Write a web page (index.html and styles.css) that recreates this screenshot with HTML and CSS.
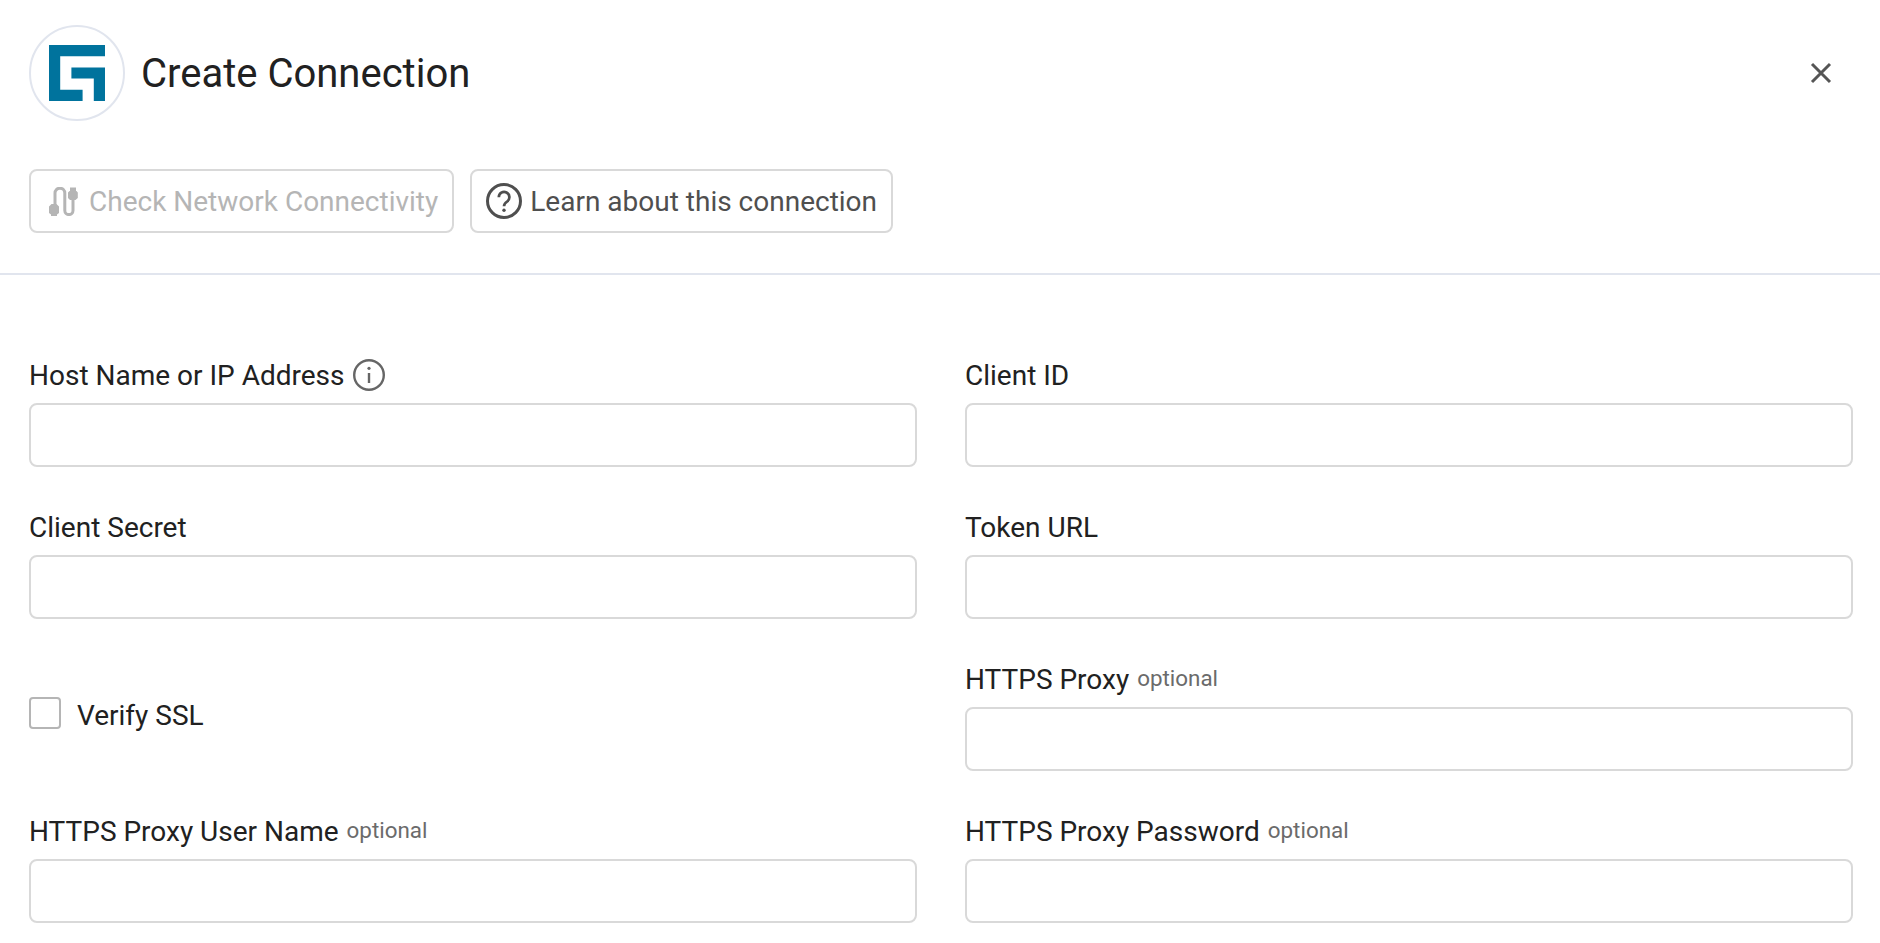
FILE: index.html
```html
<!DOCTYPE html>
<html lang="en">
<head>
<meta charset="utf-8">
<title>Create Connection</title>
<link rel="stylesheet" href="styles.css">
</head>
<body>
<header class="head">
  <div class="title-row">
    <div class="logo">
      <svg width="56" height="56" viewBox="0 0 5 5"><path fill="#00739d" d="M0 0H5V1H1V4H3V5H0ZM2 2H5V5H4V3H2Z"/></svg>
    </div>
    <h1 class="title">Create Connection</h1>
    <button class="close" type="button" aria-label="Close">
      <svg width="24" height="24" viewBox="0 0 24 24"><path d="M3 3L21 21M21 3L3 21" stroke="#555" stroke-width="3" fill="none"/></svg>
    </button>
  </div>
  <div class="actions">
    <button class="btn btn-disabled" type="button">
      <svg width="29" height="29" viewBox="0 0 29 29"><g fill="#b5b5b5"><path d="M2.500 17H7.500L10 19.500V26L8 27.500V29H2V27.500L0 26V19.500Z"/><path d="M19 5.500L20.500 4H21V0.500H27V4H27.500L28.800 5.500V11L26.500 13H21L19 11Z"/></g><path d="M6 20V6.100a4.900 4.900 0 0 1 9.800 0V23.500a4.100 4.100 0 0 0 8.200 0V12" fill="none" stroke="#b5b5b5" stroke-width="3"/></svg>
      <span>Check Network Connectivity</span>
    </button>
    <button class="btn btn-help" type="button">
      <svg width="36" height="36" viewBox="0 0 36 36"><circle cx="18" cy="18" r="16.500" fill="none" stroke="#4f4f4f" stroke-width="3"/><path d="M12.800 14.200a5.300 5.300 0 1 1 8.400 4.300c-2 1.400-3.200 2.300-3.200 4.700" fill="none" stroke="#4f4f4f" stroke-width="2.700"/><circle cx="18" cy="27.300" r="1.700" fill="#4f4f4f"/></svg>
      <span>Learn about this connection</span>
    </button>
  </div>
</header>
<main class="form">
  <div class="field">
    <label class="label">Host Name or IP Address
      <svg class="info" width="32" height="32" viewBox="0 0 32 32"><circle cx="16" cy="16" r="14.800" fill="none" stroke="#666" stroke-width="2.400"/><circle cx="16" cy="9.300" r="1.600" fill="#666"/><path d="M16 14V24" stroke="#666" stroke-width="2.400"/></svg>
    </label>
    <input class="input" type="text">
  </div>
  <div class="field">
    <label class="label">Client ID</label>
    <input class="input" type="text">
  </div>
  <div class="field">
    <label class="label">Client Secret</label>
    <input class="input" type="text">
  </div>
  <div class="field">
    <label class="label">Token URL</label>
    <input class="input" type="text">
  </div>
  <div class="check-field">
    <span class="checkbox"></span>
    <span class="check-label">Verify SSL</span>
  </div>
  <div class="field">
    <label class="label">HTTPS Proxy <small class="opt">optional</small></label>
    <input class="input" type="text">
  </div>
  <div class="field">
    <label class="label">HTTPS Proxy User Name <small class="opt">optional</small></label>
    <input class="input" type="text">
  </div>
  <div class="field">
    <label class="label">HTTPS Proxy Password <small class="opt">optional</small></label>
    <input class="input" type="text">
  </div>
</main>
</body>
</html>
```
FILE: styles.css
```css
* { box-sizing: border-box; }
html, body { margin: 0; height: 100%; overflow: hidden; background: #fff; }
body { font-family: Roboto, "Liberation Sans", sans-serif; color: #212121; }
.head { border-bottom: 2px solid #e1e5ee; height: 275px; padding: 25px 27px 0 29px; }
.title-row { display: flex; align-items: center; height: 96px; }
.logo { width: 96px; height: 96px; border: 2px solid #e1e5ee; border-radius: 50%; display: flex; align-items: center; justify-content: center; flex: none; }
.title { font-size: 40px; font-weight: 400; margin: 2px 0 0 16px; flex: 1; line-height: 48px; }
.close { border: 0; background: none; padding: 0; width: 24px; height: 24px; margin-right: 20px; }
.actions { display: flex; gap: 16px; margin-top: 48px; }
.btn { display: flex; align-items: center; gap: 8px; height: 64px; padding: 0 14px; border: 2px solid #d9d9d9; border-radius: 8px; background: #fff; font: 400 28px Roboto, sans-serif; color: #4f4f4f; }
.btn-disabled { color: #b5b5b5; padding: 0 14px 0 18px; gap: 11px; }
.form { display: grid; grid-template-columns: 888px 888px; column-gap: 48px; padding: 84px 27px 0 29px; grid-auto-rows: 152px; }
.field { display: flex; flex-direction: column; }
.label { display: flex; align-items: center; gap: 8px; height: 44px; padding-bottom: 12px; font-size: 28px; color: #212121; white-space: nowrap; }
.opt { font-size: 22.4px; color: #6b6b6b; margin-bottom: 2px; }
.info { flex: none; }
.input { height: 64px; border: 2px solid #d9d9d9; border-radius: 8px; background: #fff; width: 100%; }
.check-field { display: flex; align-items: flex-start; gap: 16px; padding-top: 34px; }
.checkbox { width: 32px; height: 32px; border: 2px solid #b5b5b5; border-radius: 4px; }
.check-label { font-size: 28px; line-height: 32px; margin-top: 3px; }
```
